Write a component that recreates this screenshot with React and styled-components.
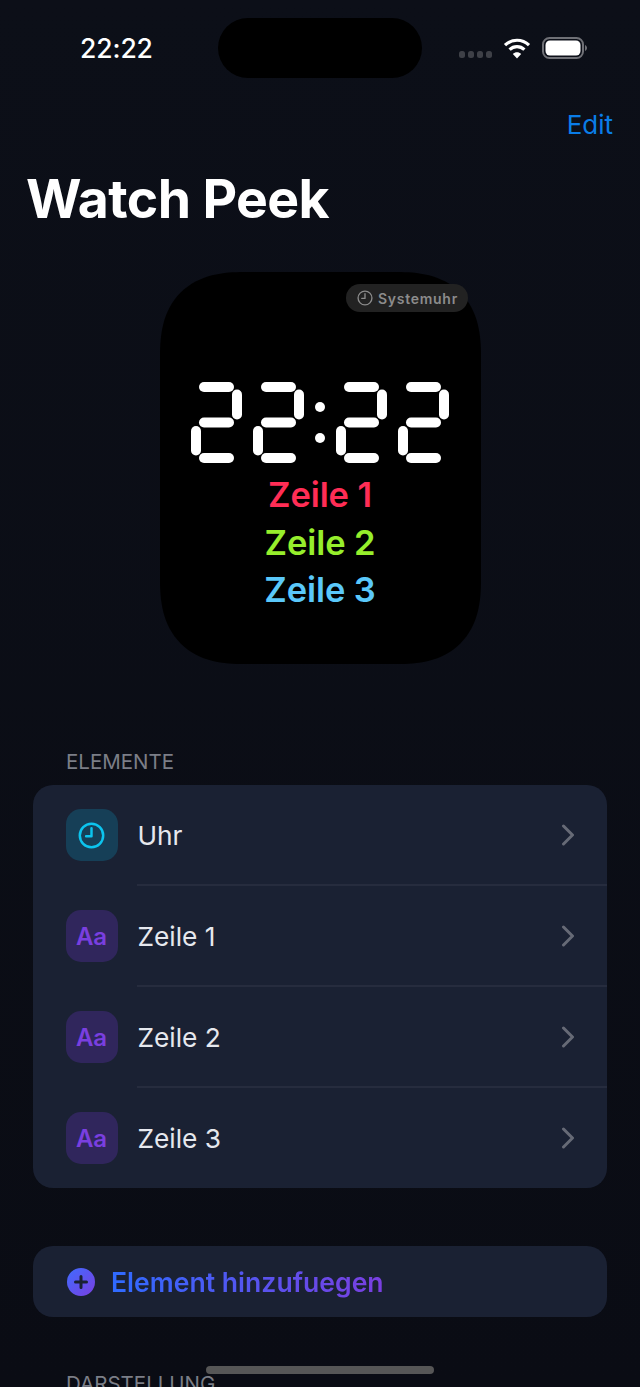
import React from "react";
import styled, { createGlobalStyle } from "styled-components";

const Global = createGlobalStyle`
  html, body { margin: 0; padding: 0; background: #0b0e17; }
  body { font-family: Inter, "Noto Sans", sans-serif; -webkit-font-smoothing: antialiased; }
`;

const Screen = styled.div`
  position: relative;
  width: 640px;
  height: 1387px;
  overflow: hidden;
  background: linear-gradient(#0c0f18, #0a0c14);
  color: #fff;
`;

const StatusBar = styled.div`
  height: 96px;
  box-sizing: border-box;
  padding: 0 53px 0 80px;
  display: flex;
  align-items: center;
  justify-content: space-between;
`;

const Time = styled.div`
  font-size: 26.5px;
  font-weight: 500;
  letter-spacing: -0.1px;
`;

const Island = styled.div`
  position: absolute;
  left: 218px;
  top: 18px;
  width: 204px;
  height: 60px;
  border-radius: 30px;
  background: #000;
`;

const StatusIcons = styled.div`
  display: flex;
  align-items: center;
  gap: 11px;
`;

const NavRow = styled.div`
  display: flex;
  justify-content: flex-end;
  padding: 12px 27px 0 0;
  height: 32px;
  align-items: center;
`;

const EditLink = styled.span`
  font-size: 26px;
  font-weight: 400;
  color: #0a7de8;
`;

const Title = styled.h1`
  margin: 29px 0 0 26px;
  font-size: 53.5px;
  line-height: 60px;
  font-weight: 700;
  letter-spacing: -0.6px;
`;

const FaceWrap = styled.div`
  margin-top: 43px;
  padding-left: 160px;
`;

const Face = styled.div`
  position: relative;
  width: 321px;
  height: 392px;
  box-sizing: border-box;
  padding-top: 110px;
  border-radius: 72px;
  background: #000;
  display: flex;
  flex-direction: column;
  align-items: center;
  @supports (corner-shape: squircle) {
    border-radius: 84px;
    corner-shape: superellipse(1.3);
  }
`;

const Badge = styled.div`
  position: absolute;
  top: 12px;
  right: 13px;
  height: 28px;
  width: 122px;
  box-sizing: border-box;
  padding-left: 11px;
  border-radius: 14px;
  background: #222222;
  color: #8c8c8c;
  display: flex;
  align-items: center;
  gap: 5px;
  font-size: 14px;
  font-weight: 600;
  letter-spacing: 0.72px;
`;

const Clock = styled.div`
  display: flex;
  align-items: center;
  height: 81px;
  margin-left: -1px;
`;

const DigitGap = styled.div`
  width: 11px;
`;

const Colon = styled.div`
  width: 32px;
  height: 41px;
  display: flex;
  flex-direction: column;
  justify-content: space-between;
  align-items: center;
  margin-top: -1px;
`;

const Dot = styled.div`
  width: 10px;
  height: 10px;
  border-radius: 50%;
  background: #fff;
`;

const FaceLines = styled.div`
  margin-top: 8px;
  display: flex;
  flex-direction: column;
  align-items: center;
`;

const FaceLine = styled.div`
  font-size: 34.5px;
  line-height: 47.5px;
  font-weight: 600;
  letter-spacing: -0.1px;
  margin-left: -1px;
  color: ${(p) => p.$color};
`;

const SectionLabel = styled.div`
  margin: ${(p) => p.$top}px 0 0 66px;
  font-size: 20.5px;
  line-height: 24px;
  font-weight: 400;
  color: #7b7e87;
`;

const Card = styled.div`
  margin: ${(p) => p.$top}px 33px 0;
  border-radius: 20px;
  background: #1a2133;
`;

const Row = styled.div`
  position: relative;
  height: 101px;
  display: flex;
  align-items: center;
  padding: 0 33px 1px 32.5px;
  box-sizing: border-box;
  gap: 20px;
  &:last-child {
    height: 100px;
    padding-bottom: 0;
  }
  &:not(:last-child)::after {
    content: "";
    position: absolute;
    left: 104px;
    right: 0;
    bottom: 0;
    height: 2px;
    background: #262c3e;
  }
`;

const IconTile = styled.div`
  width: 52px;
  height: 52px;
  flex: none;
  border-radius: 15px;
  background: ${(p) => p.$bg};
  color: ${(p) => p.$fg};
  display: flex;
  align-items: center;
  justify-content: center;
  font-size: 24px;
  font-weight: 600;
`;

const RowLabel = styled.div`
  flex: 1;
  font-size: 26.3px;
  font-weight: 400;
  color: #e6e8ee;
`;

const Chevron = styled.svg`
  width: 14px;
  height: 22px;
  flex: none;
  margin-right: -1px;
`;

const AddCard = styled(Card)`
  height: 71px;
  display: flex;
  align-items: center;
  padding-left: 34px;
  gap: 16px;
`;

const GradientText = styled.div`
  font-size: 26.6px;
  font-weight: 600;
  background: linear-gradient(90deg, #2f6bff, #7a3fe0);
  -webkit-background-clip: text;
  background-clip: text;
  color: transparent;
`;

const HomeBar = styled.div`
  position: absolute;
  left: 206px;
  bottom: 13px;
  width: 228px;
  height: 8px;
  border-radius: 4px;
  background: #565656;
`;

function Digit() {
  return (
    <svg width="51" height="81" viewBox="0 0 51 81" fill="#fff" style={{ display: "block" }}>
      <rect x="8" y="0" width="35" height="10" rx="5" />
      <rect x="41" y="7.5" width="10" height="30" rx="5" />
      <rect x="8" y="35.5" width="35" height="10" rx="5" />
      <rect x="0" y="44" width="10" height="29.5" rx="5" />
      <rect x="8" y="71" width="35" height="10" rx="5" />
    </svg>
  );
}

function ClockIcon({ size, color, width }) {
  return (
    <svg width={size} height={size} viewBox="0 0 24 24" fill="none" stroke={color} strokeWidth={width} strokeLinecap="round" strokeLinejoin="round">
      <circle cx="12" cy="12" r="10.4" />
      <path d="M12 5.5V12.6H7.2" />
    </svg>
  );
}

function Wifi() {
  return (
    <svg width="28" height="22" viewBox="0 0 28 22" fill="none" stroke="#fff" strokeWidth="3.2">
      <path d="M2 8.2C8.8 1.6 19.2 1.6 26 8.2" />
      <path d="M6.6 12.6C10.8 8.6 17.2 8.6 21.4 12.6" />
      <path d="M14 21.5L9.8 17C12.2 14.8 15.8 14.8 18.2 17Z" fill="#fff" stroke="none" />
    </svg>
  );
}

function Battery() {
  return (
    <svg width="45" height="22" viewBox="0 0 45 22" fill="none">
      <rect x="1" y="1" width="40" height="20" rx="6.5" stroke="#6f7076" strokeWidth="2" />
      <rect x="3.5" y="3.5" width="35" height="15" rx="4.5" fill="#fff" />
      <path d="M43 8v6c1.2-.5 2-1.7 2-3s-.8-2.5-2-3Z" fill="#6f7076" />
    </svg>
  );
}

function Signal() {
  return (
    <svg width="33" height="8" viewBox="0 0 33 8" fill="#3e4047" style={{ marginTop: 13 }}>
      <rect x="0" y="0" width="6" height="7" rx="2.5" />
      <rect x="9" y="0" width="6" height="7" rx="2.5" />
      <rect x="18" y="0" width="6" height="7" rx="2.5" />
      <rect x="27" y="0" width="6" height="7" rx="2.5" />
    </svg>
  );
}

function RowChevron() {
  return (
    <Chevron viewBox="0 0 14 22" fill="none" stroke="#666a76" strokeWidth="3" strokeLinecap="round" strokeLinejoin="round">
      <path d="M2.5 2L11.5 11L2.5 20" />
    </Chevron>
  );
}

const rows = [
  { label: "Uhr", clock: true },
  { label: "Zeile 1" },
  { label: "Zeile 2" },
  { label: "Zeile 3" },
];

export default function App() {
  return (
    <Screen>
      <Global />
      <StatusBar>
        <Time>22:22</Time>
        <StatusIcons>
          <Signal />
          <Wifi />
          <Battery />
        </StatusIcons>
      </StatusBar>
      <Island />
      <NavRow>
        <EditLink>Edit</EditLink>
      </NavRow>
      <Title>Watch Peek</Title>
      <FaceWrap>
        <Face>
          <Badge>
            <ClockIcon size={16} color="#8c8c8c" width={2} />
            Systemuhr
          </Badge>
          <Clock>
            <Digit />
            <DigitGap />
            <Digit />
            <Colon>
              <Dot />
              <Dot />
            </Colon>
            <Digit />
            <DigitGap />
            <Digit />
          </Clock>
          <FaceLines>
            <FaceLine $color="#ff2d55">Zeile 1</FaceLine>
            <FaceLine $color="#96ee2c">Zeile 2</FaceLine>
            <FaceLine $color="#5ac8fa">Zeile 3</FaceLine>
          </FaceLines>
        </Face>
      </FaceWrap>
      <SectionLabel $top={86}>ELEMENTE</SectionLabel>
      <Card $top={11}>
        {rows.map((r) => (
          <Row key={r.label}>
            {r.clock ? (
              <IconTile $bg="#163f57">
                <ClockIcon size={27} color="#0cc4ee" width={2.2} />
              </IconTile>
            ) : (
              <IconTile $bg="#30265c" $fg="#7a3fe0">Aa</IconTile>
            )}
            <RowLabel>{r.label}</RowLabel>
            <RowChevron />
          </Row>
        ))}
      </Card>
      <AddCard $top={58}>
        <svg width="28" height="28" viewBox="0 0 28 28">
          <defs>
            <linearGradient id="plusFill" x1="0" y1="0" x2="1" y2="1">
              <stop offset="0" stopColor="#3f6bff" />
              <stop offset="1" stopColor="#7a3fe0" />
            </linearGradient>
          </defs>
          <circle cx="14" cy="14" r="14" fill="url(#plusFill)" />
          <path d="M14 8.5V19.5M8.5 14H19.5" stroke="#1a2133" strokeWidth="3" strokeLinecap="round" />
        </svg>
        <GradientText>Element hinzufuegen</GradientText>
      </AddCard>
      <SectionLabel $top={55}>DARSTELLUNG</SectionLabel>
      <HomeBar />
    </Screen>
  );
}
